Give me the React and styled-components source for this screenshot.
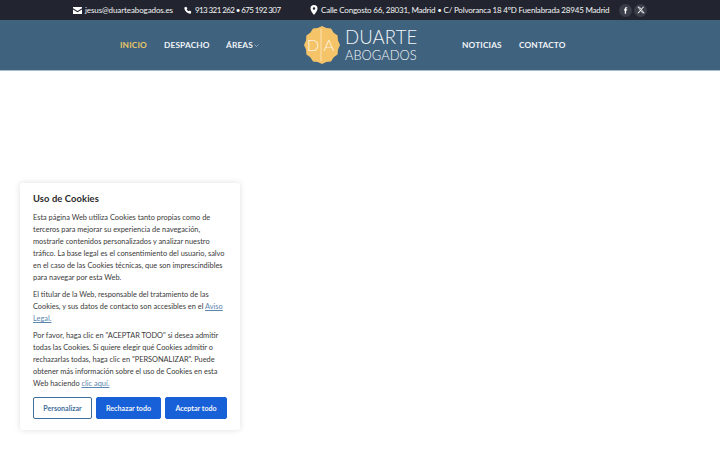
import React from "react";
import styled, { createGlobalStyle } from "styled-components";

const Global = createGlobalStyle`
  html, body { margin: 0; padding: 0; background: #fff; }
  body { font-family: "Lato", "Liberation Sans", sans-serif; width: 720px; height: 450px; overflow: hidden; }
`;
const Page = styled.div`width: 720px; height: 450px; position: relative; overflow: hidden; background: #fff;`;
const TopBar = styled.div`height: 20px; background: #22252f; display: flex; align-items: center; color: #f4f5f6; font-size: 8px; padding-left: 73px;`;
const TopItem = styled.span`display: inline-flex; align-items: center; gap: ${p => p.$gap}px; width: ${p => p.$w}px; flex: none; white-space: nowrap; letter-spacing: ${p => p.$ls}px;`;
const Social = styled.span`width: 13px; height: 13px; border-radius: 50%; background: #3a3e48; display: inline-flex; align-items: center; justify-content: center; margin-right: 2px; color: #fff;`;
const Header = styled.header`height: 51px; background: #3f627f; border-bottom: 1px solid #a9bccb; box-sizing: border-box; display: flex; align-items: center; padding-left: 120px;`;
const NavLink = styled.a`color: ${p => p.$active ? "#e8c766" : "#f2f5f8"}; font-size: 8.3px; font-weight: 700; letter-spacing: .15px; white-space: nowrap; width: ${p => p.$w}px; flex: none; display: inline-flex; align-items: center; gap: 1px;`;
const Logo = styled.div`display: flex; align-items: center; gap: 5px; width: 158px; flex: none;`;
const LogoText = styled.div`display: flex; flex-direction: column; color: #f3f6f8; font-weight: 300; line-height: 1;`;
const LogoTop = styled.span`font-size: 18.6px; letter-spacing: .1px; margin-bottom: 3px;`;
const LogoBottom = styled.span`font-size: 12.9px;`;
const Card = styled.aside`position: absolute; left: 20px; top: 183px; width: 220px; height: 247px; box-sizing: border-box; padding: 10px 13px; background: #fff; box-shadow: 0 0 6px rgba(0,0,0,.13); border-radius: 3px; color: #3a3a3a; display: flex; flex-direction: column;`;
const Title = styled.h2`margin: 0 0 7px; font-size: 9.4px; font-weight: 700; line-height: 12px; letter-spacing: .1px; color: #2a2a2a;`;
const Para = styled.p`margin: 0 0 5px; font-size: 7.4px; font-weight: 400; line-height: 12px; white-space: nowrap;`;
const Link = styled.a`color: #5b86ad; text-decoration: underline;`;
const Buttons = styled.div`display: flex; gap: 4px; margin-top: 2px;`;
const Btn = styled.button`width: ${p => p.$w}px; height: 22px; box-sizing: border-box; border-radius: 2px; border: 1px solid ${p => p.$outline ? "#3f6f9c" : "#1760d8"}; background: ${p => p.$outline ? "#fff" : "#1760d8"}; color: ${p => p.$outline ? "#3f6f9c" : "#f2f6fc"}; font: 700 7.1px "Lato", sans-serif; padding: 0;`;

const Mail = () => <svg width="9" height="7" viewBox="0 0 18 14"><path fill="#fff" d="M0 0h18v2.500L9 8 0 2.500zM0 5l9 5.500L18 5v9H0z"/></svg>;
const Phone = () => <svg width="8" height="8" viewBox="0 0 24 24"><path fill="#fff" d="M6.600 2l3.600 5-2.300 2.600c1.300 2.900 3.600 5.200 6.500 6.500l2.600-2.300 5 3.600-1.500 4.100c-.3.800-1 1.500-2 1.500C9.800 23 1 14.200 1 5.500c0-1 .7-1.700 1.500-2z"/></svg>;
const Pin = () => <svg width="8" height="10" viewBox="0 0 16 20"><path fill="#fff" fillRule="evenodd" d="M8 0a7 7 0 0 1 7 7c0 5-7 13-7 13S1 12 1 7a7 7 0 0 1 7-7zm0 4.500a2.500 2.500 0 1 0 0 5 2.500 2.500 0 0 0 0-5z"/></svg>;

const starPoints = Array.from({ length: 24 }, (_, i) => {
  const a = (i / 24) * Math.PI * 2 - Math.PI / 2;
  const r = i % 2 === 0 ? 1 : 0.92;
  return `${(18 + 18 * r * Math.cos(a)).toFixed(2)},${(19 + 19 * r * Math.sin(a)).toFixed(2)}`;
}).join(" ");

const Emblem = () => (
  <svg width="36" height="38" viewBox="0 0 36 38">
    <polygon fill="#f5c469" points={starPoints} />
    <path stroke="#fdf0d5" strokeWidth=".7" d="M17 3v32" />
    <text x="9" y="25" fontFamily="Lato, sans-serif" fontWeight="300" fontSize="16.500" fill="#fdf3df" textAnchor="middle">D</text>
    <text x="25" y="25" fontFamily="Lato, sans-serif" fontWeight="300" fontSize="16.500" fill="#fdf3df" textAnchor="middle">A</text>
  </svg>
);

export default function App() {
  return (
    <Page>
      <Global />
      <TopBar>
        <TopItem $w={111} $gap={3} $ls={-0.1}><Mail />jesus@duarteabogados.es</TopItem>
        <TopItem $w={126} $gap={3} $ls={-0.6}><Phone />913 321 262 • 675 192 307</TopItem>
        <TopItem $w={309} $gap={3} $ls={-0.19}><Pin />Calle Congosto 66, 28031, Madrid • C/ Polvoranca 18 4ºD Fuenlabrada 28945 Madrid</TopItem>
        <Social><svg width="7" height="7" viewBox="0 0 24 24"><path fill="#fff" d="M14 8V6c0-1 .5-1.500 1.500-1.500H18V1h-3.500C11 1 9.500 3 9.500 6v2H7v4h2.500v11H14V12h3.300l.7-4z"/></svg></Social>
        <Social><svg width="8" height="8" viewBox="0 0 24 24"><path fill="#fff" d="M18.200 2h3.400l-7.400 8.500L23 22h-6.800l-5.300-7-6.100 7H1.300l7.900-9.100L1 2h7l4.800 6.400zm-1.200 18h1.900L7 3.900H5z"/></svg></Social>
      </TopBar>
      <Header>
        <NavLink $active $w={44}>INICIO</NavLink>
        <NavLink $w={62}>DESPACHO</NavLink>
        <NavLink $w={78}>ÁREAS<svg width="5" height="3" viewBox="0 0 10 6"><path d="M1 1l4 4 4-4" fill="none" stroke="#dfe7ee" strokeWidth="1"/></svg></NavLink>
        <Logo><Emblem /><LogoText><LogoTop>DUARTE</LogoTop><LogoBottom>ABOGADOS</LogoBottom></LogoText></Logo>
        <NavLink $w={57}>NOTICIAS</NavLink>
        <NavLink>CONTACTO</NavLink>
      </Header>
      <Card>
        <Title>Uso de Cookies</Title>
        <Para>Esta página Web utiliza Cookies tanto propias como de<br/>terceros para mejorar su experiencia de navegación,<br/>mostrarle contenidos personalizados y analizar nuestro<br/>tráfico. La base legal es el consentimiento del usuario, salvo<br/>en el caso de las Cookies técnicas, que son imprescindibles<br/>para navegar por esta Web.</Para>
        <Para>El titular de la Web, responsable del tratamiento de las<br/>Cookies, y sus datos de contacto son accesibles en el <Link>Aviso<br/>Legal.</Link></Para>
        <Para>Por favor, haga clic en "ACEPTAR TODO" si desea admitir<br/>todas las Cookies. Si quiere elegir qué Cookies admitir o<br/>rechazarlas todas, haga clic en "PERSONALIZAR". Puede<br/>obtener más información sobre el uso de Cookies en esta<br/>Web haciendo <Link>clic aquí.</Link></Para>
        <Buttons>
          <Btn $outline $w={59}>Personalizar</Btn>
          <Btn $w={65}>Rechazar todo</Btn>
          <Btn $w={62}>Aceptar todo</Btn>
        </Buttons>
      </Card>
    </Page>
  );
}
